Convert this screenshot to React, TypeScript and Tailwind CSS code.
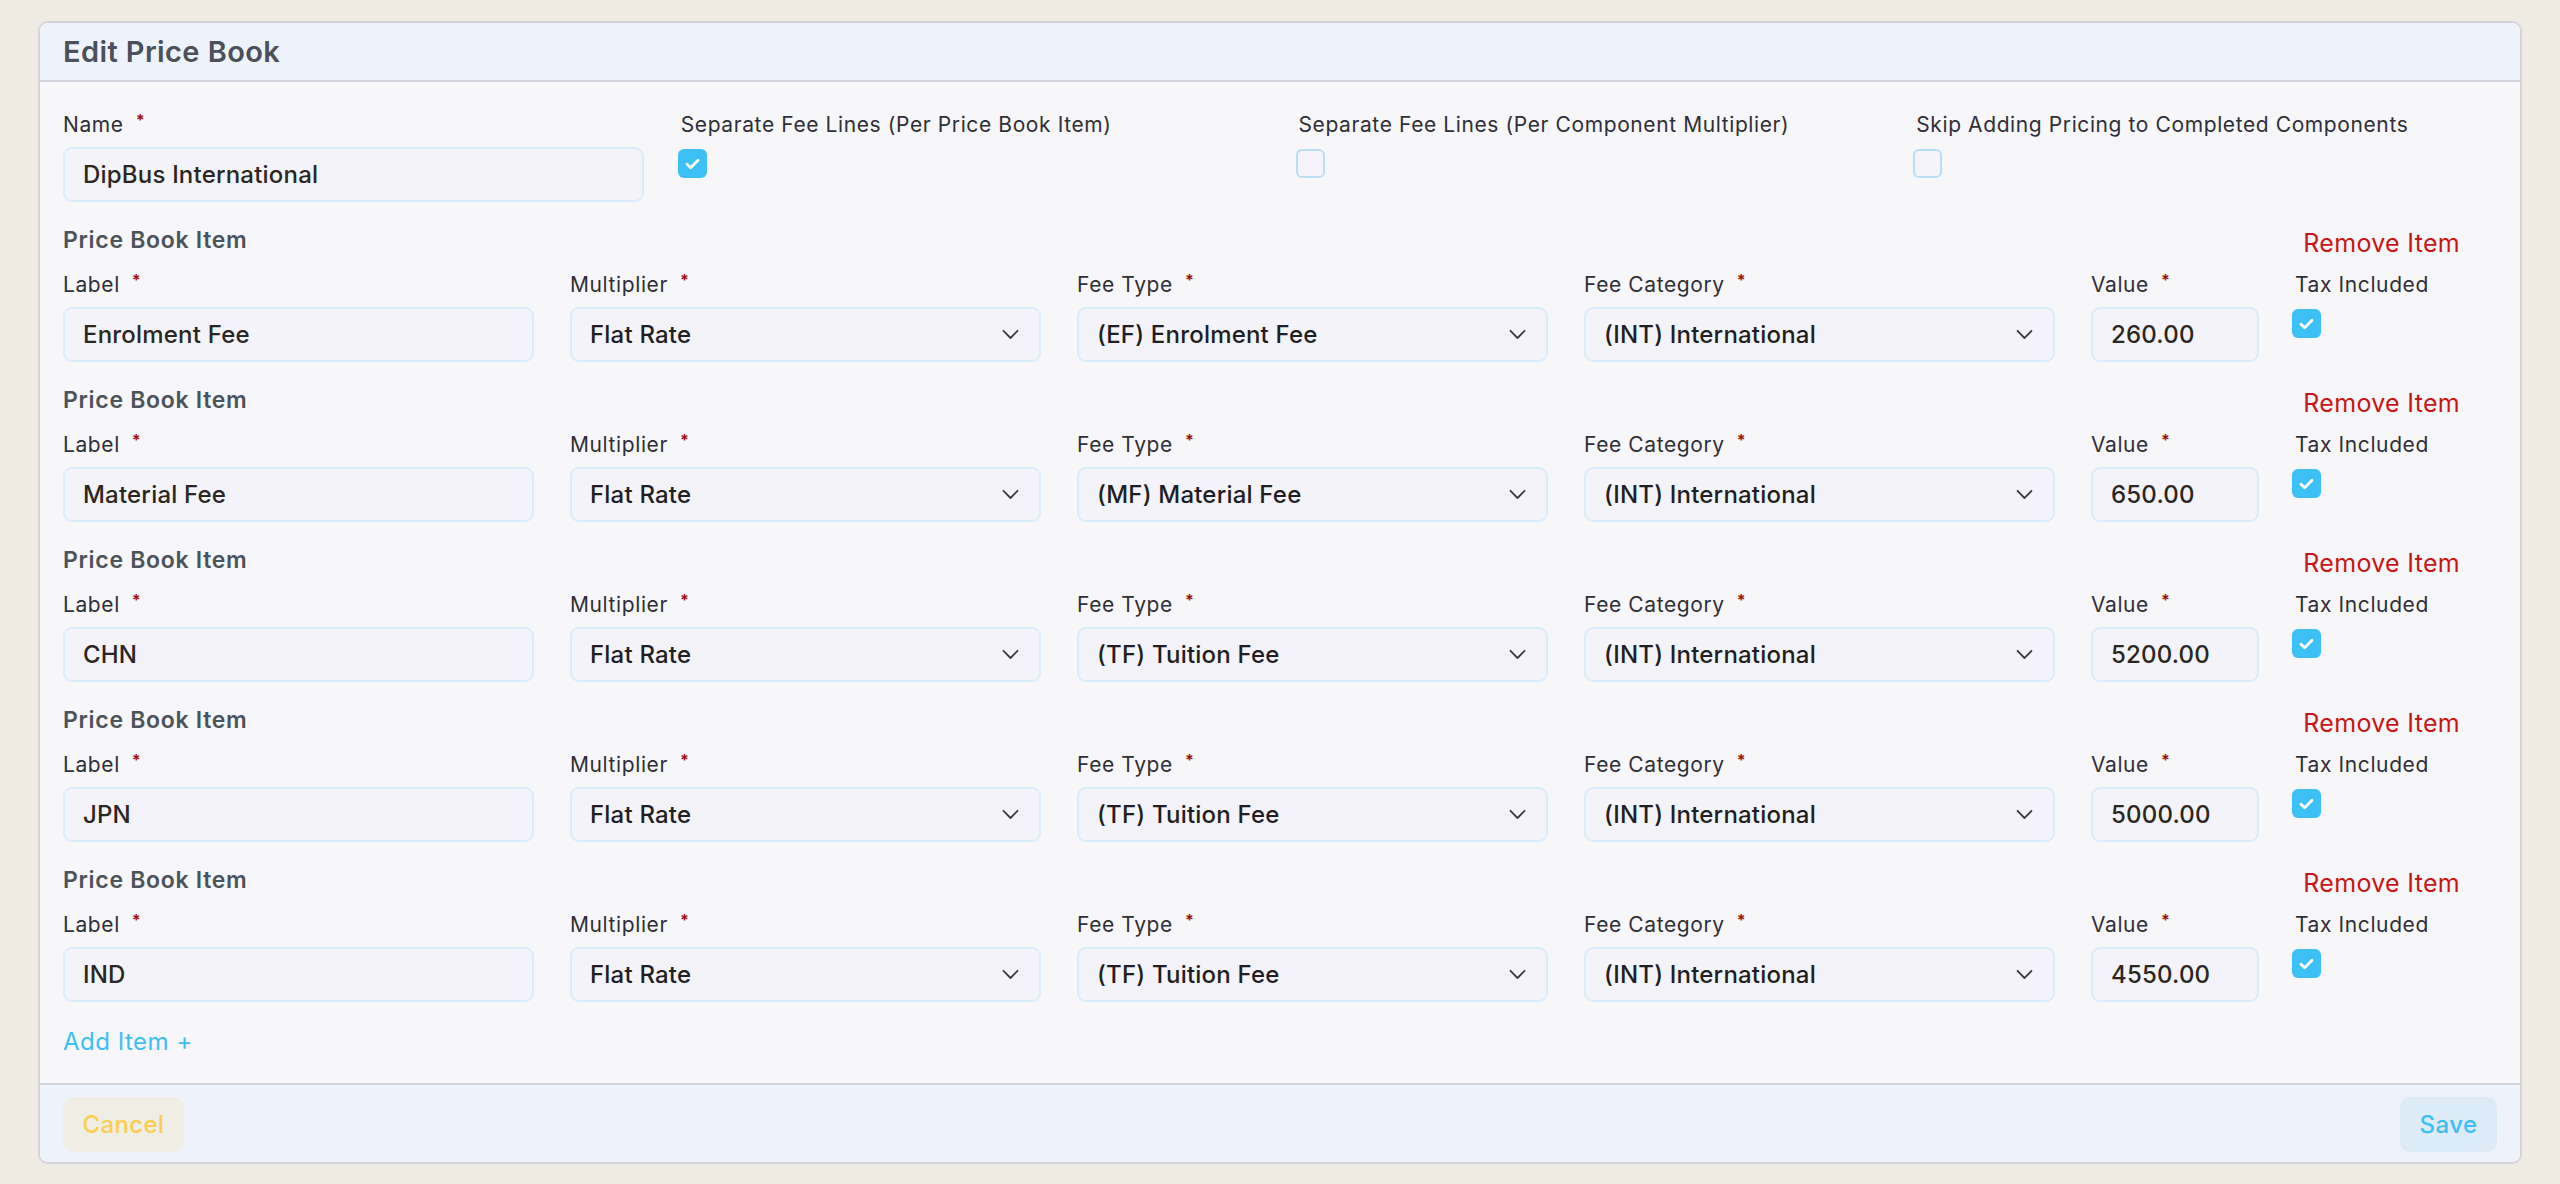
import React from "react";

interface PriceBookItem {
  label: string;
  multiplier: string;
  feeType: string;
  feeCategory: string;
  value: string;
  taxIncluded: boolean;
}

const items: PriceBookItem[] = [
  { label: "Enrolment Fee", multiplier: "Flat Rate", feeType: "(EF) Enrolment Fee", feeCategory: "(INT) International", value: "260.00", taxIncluded: true },
  { label: "Material Fee", multiplier: "Flat Rate", feeType: "(MF) Material Fee", feeCategory: "(INT) International", value: "650.00", taxIncluded: true },
  { label: "CHN", multiplier: "Flat Rate", feeType: "(TF) Tuition Fee", feeCategory: "(INT) International", value: "5200.00", taxIncluded: true },
  { label: "JPN", multiplier: "Flat Rate", feeType: "(TF) Tuition Fee", feeCategory: "(INT) International", value: "5000.00", taxIncluded: true },
  { label: "IND", multiplier: "Flat Rate", feeType: "(TF) Tuition Fee", feeCategory: "(INT) International", value: "4550.00", taxIncluded: true },
];

const FieldLabel = ({ text, required = false }: { text: string; required?: boolean }) => (
  <div className="mb-[8px] flex h-[28px] items-center whitespace-nowrap text-[21px] leading-[28px] tracking-[0.6px] text-[#2f2f37]">
    <span>{text}</span>
    {required && <span className="relative -top-[5px] ml-[12px] text-[16px] font-bold text-[#a10d0d]">*</span>}
  </div>
);

const TextBox = ({ value }: { value: string }) => (
  <div className="flex h-[55px] items-center rounded-[9px] border-2 border-[#d9ecf9] bg-[#f3f3f9] px-[18px] text-[24px] font-medium tracking-[0.2px] text-[#2b261f]">
    {value}
  </div>
);

const SelectBox = ({ value }: { value: string }) => (
  <div className="flex h-[55px] items-center justify-between rounded-[9px] border-2 border-[#d9ecf9] bg-[#f3f3f9] pl-[18px] pr-[20px] text-[24px] font-medium tracking-[0.2px] text-[#1f1e25]">
    <span>{value}</span>
    <svg width="17" height="11" viewBox="0 0 17 11" fill="none">
      <path d="M1.5 1.8 8.5 9 15.5 1.8" stroke="#3b3b44" strokeWidth="1.8" strokeLinecap="round" strokeLinejoin="round" />
    </svg>
  </div>
);

const Checkbox = ({ checked }: { checked: boolean }) =>
  checked ? (
    <div className="-ml-[3px] flex h-[29px] w-[29px] items-center justify-center rounded-[6px] bg-[#3dc0f6]">
      <svg width="15" height="12" viewBox="0 0 15 12" fill="none">
        <path d="M2 6.3 5.6 9.8 13 2.3" stroke="white" strokeWidth="2.8" strokeLinecap="round" strokeLinejoin="round" />
      </svg>
    </div>
  ) : (
    <div className="-ml-[3px] h-[29px] w-[29px] rounded-[6px] border-2 border-[#b9def6] bg-[#f4f4fa]" />
  );

export default function App() {
  return (
    <div
      className="min-h-screen bg-[#f0ece4] px-[38px] pb-[20px] pt-[21px]"
      style={{ fontFamily: "Inter, 'Noto Sans', sans-serif" }}
    >
      <div className="overflow-hidden rounded-[10px] border-2 border-[#d4d4d9] bg-[#f7f6f9]">
        {/* Header */}
        <div className="flex h-[59px] items-center border-b-2 border-[#cfd2d8] bg-[#eef3fb] px-[23px]">
          <h1 className="text-[29px] font-semibold tracking-[0.4px] text-[#4b505a]">Edit Price Book</h1>
        </div>

        {/* Body */}
        <div className="px-[23px] pb-[27px] pt-[29px]">
          <div className="grid grid-cols-4 gap-x-[37px]">
            <div>
              <FieldLabel text="Name" required />
              <TextBox value="DipBus International" />
            </div>
            <div>
              <FieldLabel text="Separate Fee Lines (Per Price Book Item)" />
              <div className="pt-[2px]">
                <Checkbox checked />
              </div>
            </div>
            <div>
              <FieldLabel text="Separate Fee Lines (Per Component Multiplier)" />
              <div className="pt-[2px]">
                <Checkbox checked={false} />
              </div>
            </div>
            <div>
              <FieldLabel text="Skip Adding Pricing to Completed Components" />
              <div className="pt-[2px]">
                <Checkbox checked={false} />
              </div>
            </div>
          </div>

          {items.map((item, i) => (
            <div key={i} className="mt-[24px]">
              <div className="mb-[17px] flex h-[28px] items-center justify-between pr-[37px]">
                <h2 className="text-[23px] font-semibold tracking-[0.7px] text-[#4b535c]">Price Book Item</h2>
                <button className="relative top-[4px] text-[25px] tracking-[0.3px] text-[#c91515]">Remove Item</button>
              </div>
              <div className="grid grid-cols-[repeat(4,minmax(0,1fr))_168px_202px] gap-x-[36px]">
                <div>
                  <FieldLabel text="Label" required />
                  <TextBox value={item.label} />
                </div>
                <div>
                  <FieldLabel text="Multiplier" required />
                  <SelectBox value={item.multiplier} />
                </div>
                <div>
                  <FieldLabel text="Fee Type" required />
                  <SelectBox value={item.feeType} />
                </div>
                <div>
                  <FieldLabel text="Fee Category" required />
                  <SelectBox value={item.feeCategory} />
                </div>
                <div>
                  <FieldLabel text="Value" required />
                  <TextBox value={item.value} />
                </div>
                <div>
                  <FieldLabel text="Tax Included" />
                  <div className="pt-[2px]">
                    <Checkbox checked={item.taxIncluded} />
                  </div>
                </div>
              </div>
            </div>
          ))}

          <button className="mt-[26px] flex h-[28px] items-center text-[24px] tracking-[0.5px] text-[#3cbff6]">Add Item +</button>
        </div>

        {/* Footer */}
        <div className="flex items-center justify-between border-t-2 border-[#d0d3d9] bg-[#eef3fb] px-[23px] pb-[10px] pt-[12px]">
          <button className="flex h-[55px] w-[121px] items-center justify-center rounded-[10px] bg-[#efede4] text-[24px] font-medium tracking-[0.4px] text-[#fccd50]">
            Cancel
          </button>
          <button className="flex h-[55px] w-[97px] items-center justify-center rounded-[10px] bg-[#dcebf6] text-[24px] font-medium tracking-[0.4px] text-[#3cbff6]">
            Save
          </button>
        </div>
      </div>
    </div>
  );
}
